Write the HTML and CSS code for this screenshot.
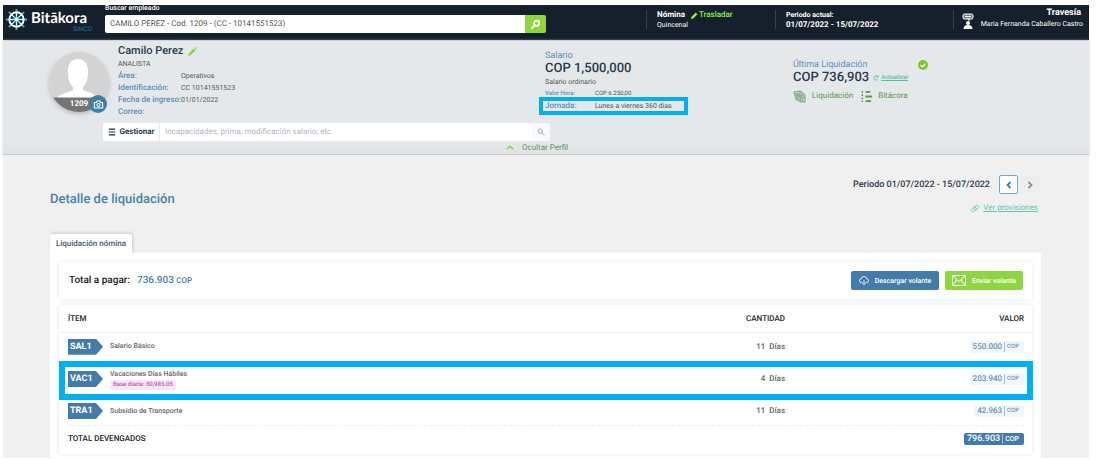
FILE: index.html
```html
<!DOCTYPE html>
<html lang="es">
<head>
<meta charset="utf-8">
<meta name="viewport" content="width=device-width, initial-scale=1">
<title>Bitākora - Detalle de liquidación</title>
<link rel="stylesheet" href="styles.css">
</head>
<body>
<header class="topbar">
  <div class="brand">
    <svg class="brand-icon" viewBox="0 0 24 24" fill="none" stroke="#fff" aria-hidden="true">
      <path stroke="#3fa9d0" stroke-width="2" d="M12 1v22M1 12h22M4 4l16 16M20 4L4 20"/>
      <circle cx="12" cy="12" r="7.500" stroke-width="2"/>
      <path stroke-width="1" d="M12 5v14M5 12h14M7 7l10 10M17 7L7 17"/>
      <circle cx="12" cy="12" r="2.500" fill="#fff" stroke="#3fa9d0" stroke-width="1"/>
    </svg>
    <div class="brand-text"><span class="brand-name">Bitākora</span><span class="brand-sub">SINCO</span></div>
  </div>
  <form class="employee">
    <label for="employee">Buscar empleado</label>
    <div class="employee-field">
      <input id="employee" type="text" value="CAMILO PEREZ - Cod. 1209 - (CC - 10141551523)">
      <button type="button" aria-label="Buscar empleado"><svg viewBox="0 0 12 12" fill="none" stroke="#fff" aria-hidden="true"><circle cx="7.2" cy="4.6" r="2.8" stroke-width="1.9"/><path d="M5.2 6.8L1.6 10.4" stroke-width="2.2"/></svg></button>
    </div>
  </form>
  <div class="fact">
    <div class="fact-line"><strong>Nómina</strong><a class="transfer" href="#"><svg viewBox="0 0 12 12" aria-hidden="true"><path fill="#8cf23f" d="M0 12l1-4L8 1l3 3L4 11z"/></svg>Trasladar</a></div>
    <div class="small">Quincenal</div>
  </div>
  <div class="fact period"><strong>Periodo actual:</strong><strong class="dates">01/07/2022 - 15/07/2022</strong></div>
  <div class="fact user">
    <svg viewBox="0 0 12 18" fill="none" stroke="#fff" aria-hidden="true"><rect x="1" y="2" width="10" height="5" rx="1.500" fill="#7b828b"/><path d="M3 4.500h6M7 7v2"/><circle cx="6" cy="11" r="2" fill="#fff" stroke="none"/><path fill="#fff" stroke="none" d="M1.500 17q0-4 4.500-4t4.500 4z"/></svg>
    <div><strong class="company">Travesía</strong><span class="user-name">Maria Fernanda Caballero Castro</span></div>
  </div>
</header>

<section class="profile">
  <div class="profile-grid">
    <div class="photo">
      <svg viewBox="0 0 60 60" aria-hidden="true">
        <defs><clipPath id="round"><circle cx="30" cy="30" r="30"/></clipPath></defs>
        <g clip-path="url(#round)"><rect width="60" height="60" fill="#d3d3d3"/>
        <path fill="#fff" d="M8 46c2-3 8-5 14-7q3-1 2-4c-4-4-5-9-5-16 0-8 4-12 10-12s10 4 10 12c0 7-1 12-5 16q-1 3 2 4c6 2 12 4 14 7z"/>
        <rect y="45.500" width="60" height="15" fill="#747474"/></g>
      </svg>
      <span class="code">1209</span>
      <button class="camera" type="button" aria-label="Cambiar foto"><svg viewBox="0 0 16 16" fill="none" stroke="#fff" stroke-width="1.500" aria-hidden="true"><path d="M2 5h3l1-2h4l1 2h3v8H2z"/><circle cx="8" cy="8.700" r="2.300"/></svg></button>
    </div>
    <div class="person">
      <h1>Camilo Perez <svg viewBox="0 0 12 12" aria-hidden="true"><path fill="#8ed63f" d="M0 12l1-3.500L7.500 2l2.500 2.500L3.500 11zM8.500 1l1-1L12 2.500l-1 1z"/></svg></h1>
      <div class="role">ANALISTA</div>
      <dl>
        <dt>Área:</dt><dd>Operativos</dd>
        <dt>Identificación:</dt><dd>CC 10141551523</dd>
        <dt>Fecha de ingreso:</dt><dd>01/01/2022</dd>
        <dt>Correo:</dt><dd></dd>
      </dl>
    </div>
    <div class="manage">
      <button class="manage-button" type="button"><svg viewBox="0 0 10 10" stroke="#1f2d3d" stroke-width="1.500" aria-hidden="true"><path d="M1 1.500h8M1 5h8M1 8.500h8"/></svg>Gestionar</button>
      <input type="search" aria-label="Gestionar" placeholder="Incapacidades, prima, modificación salario, etc.">
      <button class="manage-search" type="button" aria-label="Buscar"><svg viewBox="0 0 12 12" fill="none" stroke="#a5abb5" stroke-width="1.500" aria-hidden="true"><circle cx="4.800" cy="4.800" r="3.300"/><path d="M7.200 7.200l4 4"/></svg></button>
    </div>
    <div class="salary">
      <div class="caption">Salario</div>
      <div class="amount">COP 1,500,000</div>
      <div class="kind">Salario ordinario</div>
      <div class="pair hour"><span>Valor Hora:</span><span>COP 6.250,00</span></div>
      <div class="pair shift"><span>Jornada:</span><span>Lunes a viernes 360 días</span></div>
    </div>
    <div class="last">
      <div class="last-head">
        <div class="caption">Última Liquidación</div>
        <svg class="check" viewBox="0 0 12 12" aria-hidden="true"><circle cx="6" cy="6" r="6" fill="#7ac92f"/><path d="M3.200 6.200l2 2 3.600-3.900" fill="none" stroke="#fff" stroke-width="1.400"/></svg>
      </div>
      <div class="last-amount"><span class="amount">COP 736,903</span><a class="refresh" href="#"><svg viewBox="0 0 10 10" fill="none" stroke="#4cc3a5" stroke-width="1.500" aria-hidden="true"><path d="M8 7a3.500 3.500 0 1 1-.2-4.300M8.500 .5v3h-3"/></svg><span>Actualizar</span></a></div>
      <nav class="shortcuts">
        <a href="#"><svg class="money" viewBox="0 0 14 14" fill="none" stroke="#7fa983" aria-hidden="true"><path d="M1 2l7-1 5 4v8H8L3 10z" fill="#bdd0c2"/><path d="M1 4l9 2M2 6l7 1M3 8l5 3M7 1l5 6M8 13V8h5M3 10l5-4M10 8v5"/><circle cx="6" cy="5" r="1.700"/></svg>Liquidación</a>
        <a href="#"><svg viewBox="0 0 12 14" fill="none" stroke="#5b9638" aria-hidden="true"><path d="M1.500 1v12" stroke-dasharray="2 1.500" stroke-width="1.500"/><path d="M5 2h5M5 7h7M5 12h6" stroke-width="2"/></svg>Bitácora</a>
      </nav>
    </div>
  </div>
  <button class="collapse" type="button"><svg viewBox="0 0 10 6" fill="none" stroke="#8ed63f" stroke-width="2" aria-hidden="true"><path d="M1 5l4-3.500L9 5"/></svg>Ocultar Perfil</button>
</section>

<main>
  <div class="heading">
    <h2>Detalle de liquidación</h2>
    <div class="heading-side">
      <div class="pager">
        <span>Periodo 01/07/2022 - 15/07/2022</span>
        <button class="previous" type="button" aria-label="Periodo anterior"><svg viewBox="0 0 8 8" fill="none" stroke="#3f7dab" stroke-width="1.800" aria-hidden="true"><path d="M5.500 1l-3 3 3 3"/></svg></button>
        <button class="next" type="button" aria-label="Periodo siguiente"><svg viewBox="0 0 8 8" fill="none" stroke="#8c8c8c" stroke-width="1.800" aria-hidden="true"><path d="M2.500 1l3 3-3 3"/></svg></button>
      </div>
      <a class="provisions" href="#"><svg viewBox="0 0 14 12" fill="none" stroke="#5cc7b2" aria-hidden="true"><rect x="1" y="5" width="8" height="4.500" rx="2.200" transform="rotate(-40 5 7)"/><rect x="5" y="2.500" width="8" height="4.500" rx="2.200" transform="rotate(-40 9 5)"/></svg><span>Ver provisiones</span></a>
    </div>
  </div>
  <button class="tab" type="button">Liquidación nómina</button>
  <div class="panel">
    <div class="card total">
      <div class="total-label">Total a pagar:</div>
      <div class="total-value">736.903 <small>COP</small></div>
      <div class="actions">
        <button class="download" type="button"><svg viewBox="0 0 12 12" fill="none" stroke="#fff" aria-hidden="true"><path d="M4 8.500H3a2.300 2.300 0 0 1-.3-4.600 3.300 3.300 0 0 1 6.500 0A2.300 2.300 0 0 1 9 8.500H8M6 5.500v5.500M4.200 9.200L6 11l1.800-1.800"/></svg>Descargar volante</button>
        <button class="send" type="button"><svg viewBox="0 0 14 11" fill="none" stroke="#fff" aria-hidden="true"><path d="M.5 .5h13v10H.5zM.5 .5L7 6.500l6.500-6M.5 10.500L5 5M13.500 10.500L9 5"/></svg>Enviar volante</button>
      </div>
    </div>
    <div class="card items">
      <table>
        <thead><tr><th class="item">ÍTEM</th><th class="quantity">CANTIDAD</th><th class="value">VALOR</th></tr></thead>
        <tbody>
          <tr><td><div class="concept"><span class="tag">SAL1</span><span>Salario Básico</span></div></td><td class="quantity">11&nbsp; Días</td><td class="value"><span class="money-chip">550.000<small>COP</small></span></td></tr>
          <tr class="marked"><td><div class="concept"><span class="tag">VAC1</span><div><div>Vacaciones Días Hábiles</div><span class="base">Base diaria: 50,985.05</span></div></div></td><td class="quantity">4&nbsp; Días</td><td class="value"><span class="money-chip">203.940<small>COP</small></span></td></tr>
          <tr><td><div class="concept"><span class="tag">TRA1</span><span>Subsidio de Transporte</span></div></td><td class="quantity">11&nbsp; Días</td><td class="value"><span class="money-chip">42.963<small>COP</small></span></td></tr>
        </tbody>
        <tfoot><tr><th class="item" colspan="2">TOTAL DEVENGADOS</th><td class="value"><span class="money-chip sum">796.903<small>COP</small></span></td></tr></tfoot>
      </table>
    </div>
  </div>
</main>
</body>
</html>
```
FILE: styles.css
```css
* { box-sizing: border-box; }
body { margin: 0; padding: 5px 7px 1px 3px; background: #fff; color: #2b3a4b; font: 8px/12px Roboto, "Open Sans", sans-serif; text-rendering: geometricPrecision; }
button, input { font: inherit; color: inherit; border: 0; padding: 0; margin: 0; background: none; text-rendering: inherit; }
button { cursor: pointer; display: flex; align-items: center; justify-content: center; white-space: nowrap; }
input { min-width: 0; outline: 0; }
svg { display: block; flex: none; }
h1, h2, dl, dd { margin: 0; }
strong { font-weight: 700; }

.topbar { display: grid; grid-template-columns: 102px 541fr 129fr 178fr 136fr; height: 35px; background: #161f2c; color: #fff; align-items: start; }
.brand { display: flex; gap: 3px; padding: 3px 0 0 2px; }
.brand-icon { width: 23px; height: 23px; }
.brand-text { display: flex; flex-direction: column; width: 61px; }
.brand-name { font: 700 15px/17px Lato, sans-serif; padding-top: 2px; }
.brand-sub { align-self: flex-end; font: 6px/6px Inter, sans-serif; color: #1d7f9f; }
.employee { padding-right: 100px; }
.employee label { display: block; font-weight: 500; font-size: 7px; line-height: 6px; height: 10px; }
.employee-field { display: flex; height: 18px; }
.employee-field input { flex: 1; background: #fff; color: #555; padding: 0 5px; border-radius: 2px 0 0 2px; }
.employee-field button { width: 21px; background: #8ed63f; border-radius: 0 2px 2px 0; }
.employee-field svg { width: 11px; height: 11px; }
.fact { margin-top: 5px; height: 19px; border-left: 1px solid #3a414c; padding-left: 10px; line-height: 10px; font-size: 7px; white-space: nowrap; }
.fact-line, .transfer { display: flex; align-items: center; }
.fact-line { gap: 6px; font-size: 8px; }
.transfer { gap: 1px; color: #8cf23f; font-weight: 500; font-size: 8px; text-decoration: none; }
.transfer svg { width: 7px; height: 7px; }
.period strong { display: block; }
.period .dates { font-size: 8px; }
.user { display: flex; justify-content: flex-end; gap: 7px; padding: 0 6px 0 0; text-align: right; }
.user svg { width: 12px; height: 18px; margin-top: 2px; }
.company { display: block; font-size: 9px; line-height: 6px; padding-right: 2px; }
.user-name { display: block; padding-top: 3px; }

.profile { padding-top: 1px; background: #e4e8eb; border-top: 1px solid #cfd3d7; border-bottom: 1px solid #c5cacd; box-shadow: 0 1px 3px #d5d9dc; }
.profile-grid { display: grid; grid-template-columns: 115px minmax(0, 427fr) minmax(0, 248fr) minmax(0, 296fr); grid-template-rows: 81px 18px; }
.photo { position: relative; width: 60px; height: 60px; margin: 10px 0 0 46px; border-radius: 50%; box-shadow: 0 2px 4px #b3b8bc; }
.photo > svg { width: 60px; height: 60px; }
.code { position: absolute; left: 0; right: 0; bottom: 2px; text-align: center; color: #fff; font-weight: 700; }
.camera { position: absolute; right: 2px; bottom: -1px; width: 18px; height: 18px; border-radius: 50%; background: #3f7dab; }
.camera svg { width: 11px; height: 11px; }
.person { padding-top: 2px; }
h1 { display: flex; gap: 5px; align-items: center; font-size: 11px; line-height: 14px; font-weight: 500; }
h1 svg { width: 9px; height: 9px; }
.role, .kind { font-size: 7px; color: #555; }
dl { display: grid; grid-template-columns: 63px 1fr; grid-auto-rows: 12px; }
dt, .pair span:first-child { color: #5890c0; font-weight: 500; white-space: nowrap; }
dd { font-size: 7px; color: #555; }
.manage { grid-column: 1 / 3; grid-row: 2; display: flex; margin-left: 100px; width: 447px; background: #fff; border-radius: 2px; }
.manage-button { width: 57px; gap: 4px; font-weight: 700; border-right: 1px solid #e4e8eb; }
.manage-button svg { width: 8px; height: 8px; }
.manage input { flex: 1; padding: 0 5px; }
.manage input::placeholder { color: #b3b7bf; }
.manage-search { width: 18px; background: #f8f9fb; }
.manage-search svg { width: 8px; height: 8px; }
.salary, .last { grid-row: 1 / 3; }
.salary { grid-column: 3; padding-top: 8px; }
.caption { font-size: 9px; color: #5890c0; }
.amount { font-size: 13px; line-height: 14px; font-weight: 500; white-space: nowrap; }
.pair { display: grid; grid-template-columns: 50px 1fr; position: relative; width: 137px; color: #555; }
.hour { font-size: 6px; }
.pair span { white-space: nowrap; }
.shift span:last-child { font-size: 7px; }
.shift::after { content: ""; position: absolute; inset: -3px -6px; border: 4px solid #00b0f0; }
.last { grid-column: 4; padding-top: 17px; }
.last-head { display: flex; align-items: center; width: 135px; justify-content: space-between; }
.check { width: 10px; height: 10px; }
.last-amount { display: flex; align-items: center; gap: 4px; }
.last-amount .amount { line-height: 13px; }
.refresh { display: flex; align-items: center; gap: 2px; color: #4cc3a5; font-size: 6px; font-weight: 500; }
.refresh svg { width: 6px; height: 6px; }
.shortcuts { display: flex; gap: 8px; padding-top: 5px; }
.shortcuts a { display: flex; align-items: center; gap: 6px; color: #5f9350; text-decoration: none; line-height: 14px; }
.shortcuts svg { width: 11px; height: 13px; }
.shortcuts .money { width: 13px; }
.collapse { width: 100%; height: 13px; gap: 8px; padding-right: 18px; color: #5f9350; background: linear-gradient(#e4e8eb, #dfe3e6); }
.collapse svg { width: 8px; height: 5px; }

main { padding: 20px 48px 0 47px; background: #f0f0f0; }
.heading { display: flex; justify-content: space-between; height: 59px; }
h2 { font-size: 13px; font-weight: 500; color: #4a80aa; line-height: 16px; padding-top: 17px; }
.heading-side { padding-right: 2px; }
.pager { display: flex; align-items: center; font-size: 9px; font-weight: 500; }
.pager span { margin-right: 9px; }
.pager button { width: 19px; height: 19px; border-radius: 2px; }
.pager svg { width: 8px; height: 8px; }
.previous { background: #fff; border: 1px solid #78a5c9; }
.pager .next { width: 18px; height: 17px; margin-left: 3px; background: #ededed; }
.provisions { display: flex; justify-content: flex-end; align-items: center; gap: 3px; padding: 8px 1px 0 0; color: #5cc7b2; font-size: 8px; }
.provisions svg { width: 10px; height: 9px; }
.tab { width: 82px; height: 19px; background: #fff; border-radius: 2px 2px 0 0; color: #45586b; font-weight: 500; box-shadow: 1px -1px 3px #c7c7c7; }
.panel { position: relative; display: grid; gap: 6px; padding: 9px 9px 4px; background: #fff; }
.card { background: #fff; border-radius: 2px; box-shadow: 0 0 5px #dfe9f1; }
.total { display: flex; align-items: center; height: 37px; padding: 0 9px 0 10px; font-size: 10px; font-weight: 500; }
.total-label { color: #222; }
.total-value { color: #4a80aa; margin-left: 7px; }
.total-value small { font-size: 8px; }
.actions { display: flex; gap: 6px; margin-left: auto; color: #fff; font-size: 7px; }
.actions button { height: 19px; border-radius: 2px; gap: 6px; padding: 0 6px; }
.actions .download { background: #437cab; width: 88px; }
.actions .send { background: #8ed63f; width: 78px; }
.download svg { width: 10px; height: 11px; }
.send svg { width: 14px; height: 11px; }
.items { padding: 0 8px 0 9px; }
table { width: 100%; border-collapse: collapse; color: #666; font-weight: 500; }
th, td { padding: 0; text-align: left; font-weight: 500; }
thead th, tfoot th { color: #222; font-size: 8px; }
thead th { height: 28px; }
thead tr { position: relative; }
thead tr::after { content: ""; position: absolute; inset: 0 -8px; border-bottom: 1px solid #eceff1; }
tbody tr { height: 28px; border-bottom: 1px dashed #eceff2; }
tfoot tr { height: 29px; }
tfoot th, tfoot td { padding-bottom: 2px; }
th.quantity, td.quantity, th.value, td.value { text-align: right; }
.quantity { width: 27%; }
.value { width: 25%; }
.concept { display: flex; align-items: center; gap: 7px; font-size: 7px; line-height: 11px; }
.tag { width: 35px; height: 16px; padding-left: 2px; background: #437cab; color: #fff; font-size: 9px; line-height: 16px; font-weight: 700; clip-path: polygon(0 0, 80% 0, 100% 50%, 80% 100%, 0 100%); }
.base { display: block; width: max-content; padding: 0 3px; background: #fae5fb; color: #a762ad; border-radius: 2px; font-size: 6px; line-height: 10px; }
.marked { position: relative; }
tbody .marked { height: 36px; }
.marked::after { content: ""; position: absolute; inset: 0 -9px -4px; border: 6px solid #00b0f0; }
.money-chip { display: inline-flex; align-items: center; height: 12px; padding: 0 5px 0 3px; border-radius: 2px; background: #eff7fd; color: #6792b5; font-size: 8px; }
.money-chip small { font-size: 6px; line-height: 10px; margin-left: 2px; padding-left: 2px; border-left: 1px solid #9fbfd8; }
.money-chip.sum { background: #437cab; color: #fff; font-size: 9px; }
.sum small { font-size: 7px; }
```
